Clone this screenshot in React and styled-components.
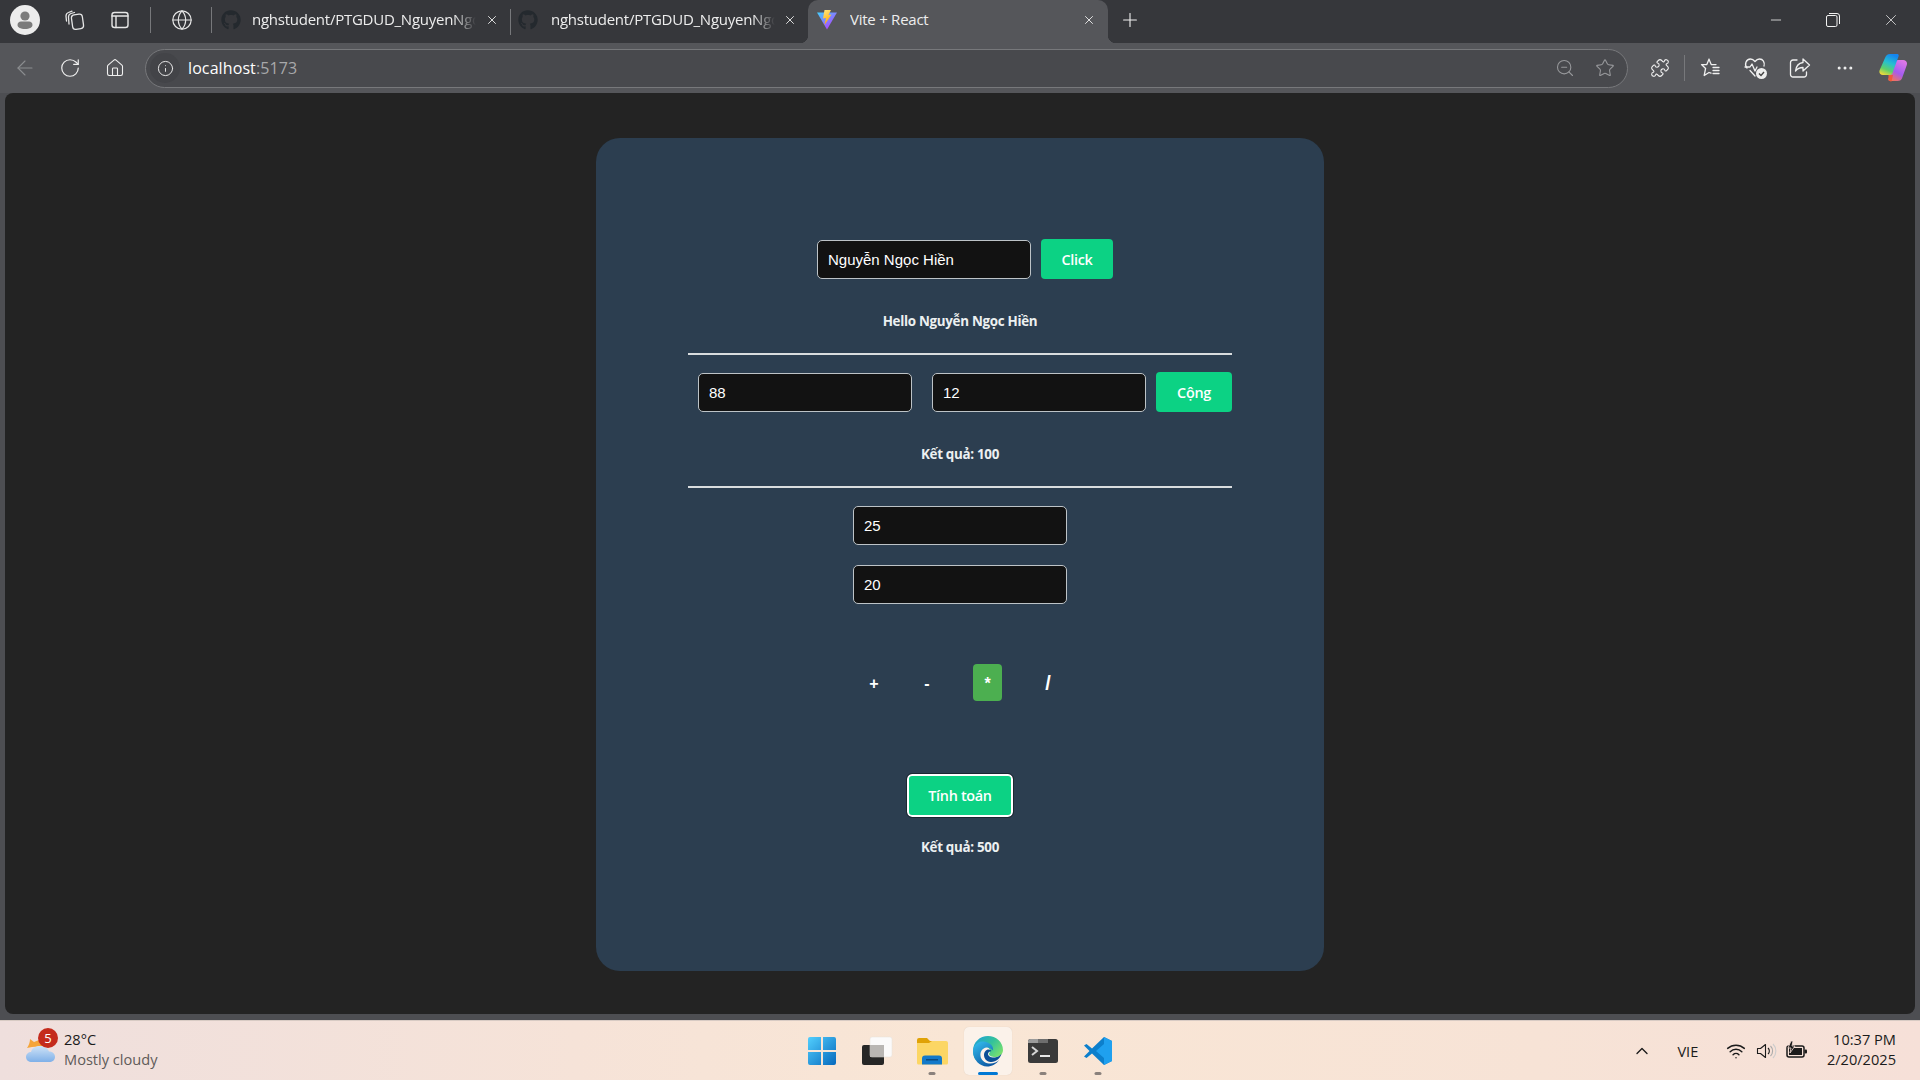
import React from "react";
import styled, { createGlobalStyle } from "styled-components";
import { FaGithub } from "react-icons/fa";
import {
  ArrowLeft, RotateCw, Home, Info, Globe, ZoomOut, Star, Puzzle, X, Plus, Minus,
  Ellipsis, ChevronUp, Wifi,
} from "lucide-react";

const UI = '"Open Sans", "Noto Sans", sans-serif';
const ARIAL = '"Liberation Sans", Arial, sans-serif';

const Global = createGlobalStyle`
  html, body { margin: 0; padding: 0; background: #55565a; }
  * { box-sizing: border-box; }
`;

const Screen = styled.div`
  width: 1920px; height: 1080px; overflow: hidden;
  display: flex; flex-direction: column;
  font-family: ${UI};
`;

const TabBar = styled.div`
  height: 43px; flex: none; display: flex; align-items: center;
  background: #36373b; color: #f2f2f2;
  & > * { padding-bottom: 3px; }
`;
const Slot = styled.div`
  width: ${(p) => p.$w}px; flex: none; height: 100%;
  display: flex; align-items: center; justify-content: center;
  color: ${(p) => p.$c || "#e6e6e6"};
`;
const Divider = styled.div`
  width: 1px; height: ${(p) => p.$h || 26}px; flex: none; background: #77787b;
`;
const Avatar = styled.div`
  width: 30px; height: 30px; border-radius: 50%; background: #ececec;
  display: flex; align-items: center; justify-content: center;
`;
const Tab = styled.div`
  position: relative; flex: none; width: ${(p) => p.$w}px; height: 100%;
  display: flex; align-items: center; padding-left: ${(p) => p.$pl}px;
  background: ${(p) => (p.$active ? "#55565a" : "transparent")};
  border-radius: 10px 10px 0 0;
  ${(p) =>
    p.$active &&
    `&::before, &::after { content: ""; position: absolute; bottom: 0; width: 8px; height: 8px; }
     &::before { left: -8px; background: radial-gradient(circle at 0 0, transparent 8px, #55565a 8.5px); }
     &::after { right: -8px; background: radial-gradient(circle at 100% 0, transparent 8px, #55565a 8.5px); }`}
`;
const TabIcon = styled.div`
  width: ${(p) => p.$w}px; flex: none; display: flex; align-items: center; color: #24292e;
`;
const TabTitle = styled.div`
  width: 224px; flex: none; font-size: 15px; white-space: nowrap; overflow: hidden;
  color: #ededed; letter-spacing: -0.25px; margin-top: -2px;
  ${(p) => p.$fade && `-webkit-mask-image: linear-gradient(90deg, #000 90%, transparent 100%);`}
`;
const TabClose = styled.div`
  width: 16px; margin-left: ${(p) => p.$ml}px; flex: none; display: flex; color: #f2f2f2;
`;
const Spring = styled.div` flex: 1; `;

const Toolbar = styled.div`
  height: 50px; flex: none; display: flex; align-items: center; background: #55565a;
`;
const Address = styled.div`
  width: 1483px; height: 39px; flex: none; margin-left: 5px; display: flex; align-items: center;
  border: 1.5px solid #77787b; border-radius: 20px; background: #48494d; padding-right: 2px;
`;
const InfoWrap = styled.div`
  width: 42px; padding-right: 4px; flex: none; display: flex; justify-content: center;
`;
const InfoDisc = styled.div`
  width: 30px; height: 30px; border-radius: 50%; background: #434448; color: #e8e8e8;
  display: flex; align-items: center; justify-content: center;
`;
const Url = styled.div`
  font-size: 16px; color: #fff; letter-spacing: 0.1px; margin-top: -1px;
  span { color: #a7a8aa; }
`;
const Gap = styled.div` width: ${(p) => p.$w}px; flex: none; `;

const Body = styled.div`
  flex: 1; padding: 0 5px 6px; background: #4d4e52; display: flex; min-height: 0;
`;
const Viewport = styled.main`
  flex: 1; background: #232323; border-radius: 8px; padding-top: 45px;
  display: flex; justify-content: center; align-items: flex-start;
`;
const Card = styled.section`
  width: 728px; height: 833px; background: #2c3e50; border-radius: 24px; padding: 101px 92px 0;
  color: #ecf0f1; display: flex; flex-direction: column; align-items: center;
`;
const Row = styled.div`
  width: 100%; display: flex; align-items: center; gap: 10px;
  justify-content: center; padding-left: 10px; margin-top: ${(p) => p.$mt || 0}px;
`;
const InputPair = styled.div` display: flex; gap: 20px; `;
const Field = styled.input`
  width: 214px; height: 39px; flex: none; background: #121212; color: #fff;
  border: 1px solid #bdc3c7; border-radius: 5px; padding: 0 10px; margin-top: ${(p) => p.$mt || 0}px;
  font: 15px ${ARIAL}; outline: none;
`;
const Action = styled.button`
  height: 40px; width: ${(p) => p.$w}px; flex: none; border: 0; border-radius: 4px;
  background: #0cd284; color: #fff; padding: 0;
  font: 600 14.4px ${UI}; letter-spacing: -0.3px;
`;
const Message = styled.p`
  margin: ${(p) => p.$mt}px 0 0; height: 19px; line-height: 19px; font-size: 13.4px; font-weight: 700;
  letter-spacing: -0.3px; color: #ecf0f1; text-align: center;
`;
const Rule = styled.hr`
  width: 100%; height: 2px; margin: 22px 0 0; border: 0; background: #d9dcde; flex: none;
`;
const Ops = styled.div`
  display: flex; gap: 40px; margin-top: 60px; height: 37px; align-items: stretch; margin-left: 1px;
`;
const Op = styled.button`
  width: ${(p) => p.$w}px; padding: 2px 0 0; border: 0; border-radius: 4px; color: #fff;
  background: ${(p) => (p.$on ? "#4caf50" : "transparent")};
  font: 700 ${(p) => p.$fs || 16}px ${ARIAL};
`;
const Compute = styled.button`
  width: 106px; height: 43px; margin-top: 73px; flex: none; padding: 0; border-radius: 5px;
  background: #0cd284; color: #fff; border: 2px solid #fff; outline: 1px solid #1b2631;
  font: 600 14.4px ${UI}; letter-spacing: -0.3px;
`;

const Taskbar = styled.footer`
  height: 60px; flex: none; display: flex; align-items: stretch;
  background: linear-gradient(90deg, #efdfdd 0%, #f6e3d8 30%, #f9e6d5 50%, #f7e3d6 80%, #f6e0d8 100%);
  border-top: 1px solid #d8cbc4;
`;
const Weather = styled.div`
  width: 795px; flex: none; display: flex; align-items: center; padding-left: 25px;
`;
const WeatherIcon = styled.div`
  position: relative; width: 39px; height: 40px; flex: none; display: flex; align-items: flex-end;
  padding-bottom: 8px;
`;
const Badge = styled.div`
  position: absolute; left: 13px; top: -3px; width: 20px; height: 20px; border-radius: 50%;
  background: #c42b1c; color: #fff; font-size: 13px; display: flex; align-items: center; justify-content: center;
`;
const TwoLines = styled.div`
  font-size: 14.6px; line-height: 20px; color: #1b1b1b; margin-top: -4px;
  text-align: ${(p) => (p.$right ? "right" : "left")};
  small { display: block; font-size: 14.6px; color: #5f5b59; }
`;
const Apps = styled.div` display: flex; align-items: center; `;
const AppButton = styled.div`
  position: relative; width: ${(p) => p.$w}px; height: 48px; flex: none; border-radius: 5px;
  display: flex; align-items: center; justify-content: center;
  background: ${(p) => (p.$active ? "#fbf2ea" : "transparent")};
  margin: ${(p) => (p.$active ? "0 1px 0 5px" : "0")};
  box-shadow: ${(p) => (p.$active ? "0 0 1px #0002" : "none")};
`;
const Running = styled.div`
  position: absolute; bottom: 0; left: 50%; transform: translateX(-50%);
  width: ${(p) => (p.$active ? 20 : 7)}px; height: 3px; border-radius: 2px;
  background: ${(p) => (p.$active ? "#0078d4" : "#8a817c")};
`;
const Tray = styled.div`
  margin-left: auto; display: flex; align-items: center; padding-right: 24px; color: #1b1b1b;
`;
const TraySlot = styled.div`
  width: ${(p) => p.$w}px; flex: none; display: flex; justify-content: center; align-items: center;
  font-size: 14.6px;
`;

const s = { fill: "none", stroke: "currentColor", strokeWidth: 1.3, strokeLinecap: "round", strokeLinejoin: "round" };

const Collections = () => (
  <svg width="22" height="22" viewBox="0 0 22 22" {...s}>
    <path d="M2.500 12 2 7C2 5 3 4 4.500 3.500L8 2.200" /><path d="M5 15 4.500 8C4.500 6 5.500 5 7 4.500L10.500 3.500" />
    <rect x="8" y="5.500" width="11" height="14.500" rx="3" transform="rotate(-8 13.500 12.750)" />
  </svg>
);
const VerticalTabs = () => (
  <svg width="20" height="20" viewBox="0 0 20 20" {...s} strokeWidth="1.4">
    <rect x="2" y="2.500" width="16" height="15" rx="2.500" /><path d="M2 6h16M6 6v11.500" />
  </svg>
);
const UserGlyph = () => (
  <svg width="24" height="24" viewBox="0 0 24 24" fill="#7b7b7b">
    <circle cx="12" cy="8" r="4.600" /><path d="M4.500 17c0-2.400 1.600-3.600 3.500-3.600h8c2 0 3.500 1.200 3.500 3.600 0 2.400-3 4-7.500 4s-7.500-1.600-7.500-4z" />
  </svg>
);
const ViteLogo = () => (
  <svg width="22" height="22" viewBox="0 0 22 22">
    <defs>
      <linearGradient id="vb" x1="0" y1="0" x2="0.8" y2="1"><stop offset="0" stopColor="#41d1ff" /><stop offset="1" stopColor="#bd34fe" /></linearGradient>
      <linearGradient id="vy" x1="0" y1="0" x2="0.3" y2="1"><stop offset="0" stopColor="#ffea83" /><stop offset="1" stopColor="#ffa800" /></linearGradient>
    </defs>
    <path d="M1 3.500 21 3.500 11 20.500z" fill="url(#vb)" />
    <path d="M8.500 1 15 1 12.500 6 15.500 5.500 8.500 16 10 9 7 9.500z" fill="url(#vy)" />
  </svg>
);
const FavIcon = () => (
  <svg width="24" height="24" viewBox="0 0 24 24" {...s}>
    <path d="M11 3.200 13.200 8.600H18M8.800 8.600H3.500L7.600 12.400 6.200 19.500 11 16.500 13 17.200M8.800 8.600 11 3.200" />
    <path d="M15 11.500h6M15 14.500h6M15 17.500h6" />
  </svg>
);
const HeartIcon = () => (
  <svg width="26" height="26" viewBox="0 0 26 26">
    <g {...s}>
      <path d="M4 13C1 9.500 3 4 7.500 4c2.300 0 3.500 1.300 4.500 2.500C13 5.300 14.200 4 16.500 4c3.500 0 5.500 3.300 4.500 7" />
      <path d="M2 12h5l2-3 3 7 2-4" /><path d="M7 15.500 12 21" />
    </g>
    <circle cx="18.500" cy="18.500" r="5.500" fill="#eee" /><path d="M16 18.500l2 2 3-3.500" fill="none" stroke="#444" strokeWidth="1.400" />
  </svg>
);
const ShareIcon = () => (
  <svg width="24" height="24" viewBox="0 0 24 24" {...s}>
    <path d="M9 4H5a2.500 2.500 0 0 0-2.500 2.500v12A2.500 2.500 0 0 0 5 21h11a2.500 2.500 0 0 0 2.500-2.500V16" />
    <path d="M15 3l6.500 6-6.500 6v-3.500c-3.500 0-5.500 1-7.500 3.500.5-4.500 3-7.800 7.500-8.500z" />
  </svg>
);
const Copilot = () => (
  <svg width="28" height="28" viewBox="0 0 28 28">
    <defs>
      <linearGradient id="c1" x1="0.6" y1="0" x2="0.2" y2="1"><stop offset="0" stopColor="#1485f0" /><stop offset="0.4" stopColor="#26c0d0" /><stop offset="0.72" stopColor="#5ed06a" /><stop offset="1" stopColor="#f4d83a" /></linearGradient>
      <linearGradient id="c2" x1="0.8" y1="0" x2="0.3" y2="1"><stop offset="0" stopColor="#e27ae6" /><stop offset="0.6" stopColor="#a45cf0" /><stop offset="1" stopColor="#f2715f" /></linearGradient>
    </defs>
    <path d="M19 6H24C27 6 28.600 8 27.800 11L23.500 23C22.500 26 21 27 18.500 27H11C9.500 27 9 26 9.500 24.500L15.500 9C16.200 7 17.500 6 19 6z" fill="url(#c2)" />
    <path d="M11 0H18C19.500 0 20 1 19.500 2.500L13.500 19C13 20.500 12 21 10.500 21H4C1 21-.3 18.500.7 16L6 4C7 1.500 8.500 0 11 0z" fill="url(#c1)" />
    <path d="M9.500 21H14L12.500 27.500C11 27.500 9 26.500 9.500 24z" fill="#ef5a3c" />
  </svg>
);
const WeatherGlyph = () => (
  <svg width="34" height="30" viewBox="0 0 34 30">
    <defs><linearGradient id="wc" x1="0" y1="0" x2="0" y2="1"><stop offset="0" stopColor="#cfe3f7" /><stop offset="1" stopColor="#7fb0e8" /></linearGradient></defs>
    <path d="M7 14 2 15c2-3 3-6 3-9l4 3 5-2 6 6z" fill="#f5a53a" />
    <path d="M7 29c-3.500 0-6-2-6-5s2.500-5 5-5c1-4 5-6.500 10-6 4 .4 7 2.500 8 5.500 4 0 6 2.500 6 5.500s-2.500 5-6 5z" fill="url(#wc)" />
  </svg>
);
const WinLogo = () => (
  <svg width="30" height="30" viewBox="0 0 30 30">
    <defs><linearGradient id="wl" x1="0" y1="0" x2="1" y2="1"><stop offset="0" stopColor="#52cffe" /><stop offset="1" stopColor="#0669bd" /></linearGradient></defs>
    <path fill="url(#wl)" d="M1 3a2 2 0 0 1 2-2h11v13H1zM16 1h11a2 2 0 0 1 2 2v11H16zM1 16h13v13H3a2 2 0 0 1-2-2zM16 16h13v11a2 2 0 0 1-2 2H16z" />
  </svg>
);
const TaskView = () => (
  <svg width="32" height="30" viewBox="0 0 32 30">
    <rect x="1" y="9" width="22" height="20" rx="2" fill="#262626" />
    <rect x="9" y="1" width="22" height="20" rx="2" fill="#fbfafa" stroke="#e5e0db" strokeWidth="0.500" />
    <rect x="9" y="9" width="14" height="12" fill="#b9b6b3" />
  </svg>
);
const Folder = () => (
  <svg width="32" height="28" viewBox="0 0 32 28">
    <path d="M1 3a2 2 0 0 1 2-2h8l3 3h16v5H1z" fill="#e0a206" />
    <path d="M1 6h12l3-2h14a2 2 0 0 1 2 2v20a1.500 1.500 0 0 1-1.500 1.500h-28A1.500 1.500 0 0 1 1 26z" fill="#fcd664" />
    <path d="M6 27.500v-6a3 3 0 0 1 3-3h14a3 3 0 0 1 3 3v6z" fill="#1379c9" />
    <rect x="10" y="22" width="12" height="1.500" fill="#0b4a80" />
  </svg>
);
const EdgeLogo = () => (
  <svg width="32" height="32" viewBox="0 0 32 32">
    <defs>
      <linearGradient id="eb" x1="0" y1="0" x2="0.6" y2="1"><stop offset="0" stopColor="#35c1f1" /><stop offset="1" stopColor="#0c59a4" /></linearGradient>
      <linearGradient id="eg" x1="0" y1="0" x2="1" y2="0.7"><stop offset="0" stopColor="#1b9de2" /><stop offset="0.55" stopColor="#34c29a" /><stop offset="1" stopColor="#7fe36a" /></linearGradient>
    </defs>
    <path d="M1 16C1 7 8 1 16 1s15 6 15 14c0 4.500-4 7-8 7-3 0-6-1-6-3 0-1 1-1.500 1-3 0-2.500-2.500-4.500-5.500-4.500-5 0-8 4-8 9 0 2 .4 3.500 1 5C3.500 26 1 21.500 1 16z" fill="url(#eg)" />
    <path d="M2 12c2-4 6-6 10-5.500 6 .8 10 5 9 9-1.500-2-4-3.500-6.500-3-4 .6-6.500 4-6 8.500.5 4 4 7 8.500 7.500 4 .4 8-1 10-3.500-2.500 4-7 6.500-12 6.500C8 31.500 1 25 1 16c0-1.400.4-2.800 1-4z" fill="url(#eb)" />
    <path d="M16 19c0 2 3 4 7 3.500 2.500-.3 5.500-1.600 6.500-4-1 5-6 9-11 8.500-4-.5-6.500-3.500-6.500-7 0-3 2-5.500 4.500-5.500 1.500 0 2.500 1 3 1.500-2 .3-3.500 1.500-3.500 3z" fill="#0a4f96" />
  </svg>
);
const Terminal = () => (
  <svg width="32" height="26" viewBox="0 0 32 26">
    <rect x="1" y="1" width="30" height="24" rx="2.500" fill="#3a3a3a" />
    <path d="M3.500 1h10v4H1V3.500A2.500 2.500 0 0 1 3.500 1z" fill="#9b9b9b" /><rect x="11" y="1" width="10" height="4" fill="#6e6e6e" />
    <path d="M5 9l5 4-5 4" fill="none" stroke="#d6d6d6" strokeWidth="2" /><rect x="13" y="17" width="10" height="2" fill="#e8e8e8" />
  </svg>
);
const VSCode = () => (
  <svg width="30" height="30" viewBox="0 0 30 30">
    <path d="M21 1 29 5v20l-8 4L9 17.500 3.500 22 1 20.500 6.500 15 1 9.500 3.500 8 9 12.500z" fill="#0c7fcc" />
    <path d="M21 1 29 5v20l-8 4zM21 8l-8 7 8 7z" fill="#1fa0ef" fillRule="evenodd" />
  </svg>
);
const Speaker = () => (
  <svg width="22" height="20" viewBox="0 0 22 20" fill="none" stroke="#1b1b1b" strokeWidth="1.100">
    <path d="M1.500 7.500v5h3l5 4v-13l-5 4z" strokeLinejoin="round" />
    <path d="M12 7a4 4 0 0 1 0 6" /><path d="M14.500 5a7 7 0 0 1 0 10" stroke="#aaa" /><path d="M17 3a10 10 0 0 1 0 14" stroke="#ccc" />
  </svg>
);
const Battery = () => (
  <svg width="22" height="20" viewBox="0 0 22 20">
    <rect x="1" y="5" width="17" height="11" rx="2" fill="none" stroke="#1b1b1b" strokeWidth="1.500" />
    <rect x="3" y="7" width="13" height="7" fill="#1b1b1b" /><rect x="18.500" y="8.500" width="2.500" height="4" rx="1" fill="#1b1b1b" />
    <path d="M5 0 2 7h3l-1 5 5-7H6l1-5z" fill="#1b1b1b" stroke="#f6e0d8" strokeWidth="0.800" />
  </svg>
);
const RestoreIcon = () => (
  <svg width="14" height="14" viewBox="0 0 14 14" fill="none" stroke="#f2f2f2" strokeWidth="1">
    <rect x="0.500" y="2.500" width="10.500" height="11" rx="1.500" /><path d="M3 .5h8a2.500 2.500 0 0 1 2.500 2.500v8" />
  </svg>
);

export default function App() {
  const small = { size: 20, strokeWidth: 1.3 };
  return (
    <Screen>
      <Global />
      <TabBar>
        <Slot $w={50}><Avatar><UserGlyph /></Avatar></Slot>
        <Slot $w={50}><Collections /></Slot>
        <Slot $w={40}><VerticalTabs /></Slot>
        <Slot $w={20}><Divider /></Slot>
        <Slot $w={44}><Globe size={22} strokeWidth={1.3} /></Slot>
        <Slot $w={14}><Divider /></Slot>
        <Tab $w={292} $pl={3}>
          <TabIcon $w={31}><FaGithub size={20} /></TabIcon>
          <TabTitle $fade>nghstudent/PTGDUD_NguyenNgọc</TabTitle>
          <TabClose $ml={9}><X size={14} strokeWidth={1.5} /></TabClose>
        </Tab>
        <Divider />
        <Tab $w={297} $pl={7}>
          <TabIcon $w={33}><FaGithub size={20} /></TabIcon>
          <TabTitle $fade>nghstudent/PTGDUD_NguyenNgọc</TabTitle>
          <TabClose $ml={8}><X size={14} strokeWidth={1.5} /></TabClose>
        </Tab>
        <Tab $w={300} $pl={8} $active>
          <TabIcon $w={34}><ViteLogo /></TabIcon>
          <TabTitle>Vite + React</TabTitle>
          <TabClose $ml={8}><X size={14} strokeWidth={1.5} /></TabClose>
        </Tab>
        <Slot $w={44}><Plus size={22} strokeWidth={1.2} color="#f2f2f2" /></Slot>
        <Spring />
        <Slot $w={56}><Minus size={16} strokeWidth={1.2} color="#f2f2f2" /></Slot>
        <Slot $w={58}><RestoreIcon /></Slot>
        <Slot $w={58}><X size={18} strokeWidth={1} color="#f2f2f2" /></Slot>
      </TabBar>
      <Toolbar>
        <Slot $w={50} $c="#8c8d90"><ArrowLeft size={24} strokeWidth={1.1} /></Slot>
        <Slot $w={40} $c="#f0f0f0"><RotateCw size={22} strokeWidth={1.3} /></Slot>
        <Slot $w={50} $c="#f0f0f0"><Home size={20} strokeWidth={1.3} /></Slot>
        <Address>
          <InfoWrap><InfoDisc><Info size={17} strokeWidth={1.4} /></InfoDisc></InfoWrap>
          <Url>localhost<span>:5173</span></Url>
          <Spring />
          <Slot $w={40} $c="#97989b"><ZoomOut {...small} /></Slot>
          <Slot $w={40} $c="#97989b"><Star {...small} /></Slot>
        </Address>
        <Gap $w={10} />
        <Slot $w={44} $c="#f0f0f0"><Puzzle size={20} strokeWidth={1.3} /></Slot>
        <Slot $w={4}><Divider /></Slot>
        <Slot $w={48} $c="#f0f0f0"><FavIcon /></Slot>
        <Slot $w={44} $c="#f0f0f0"><HeartIcon /></Slot>
        <Slot $w={44} $c="#f0f0f0"><ShareIcon /></Slot>
        <Slot $w={46} $c="#f0f0f0"><Ellipsis size={20} strokeWidth={1.6} /></Slot>
        <Slot $w={50}><Copilot /></Slot>
      </Toolbar>
      <Body>
        <Viewport>
          <Card>
            <Row>
              <Field defaultValue="Nguyễn Ngọc Hiền" />
              <Action $w={72}>Click</Action>
            </Row>
            <Message $mt={33}>Hello Nguyễn Ngọc Hiền</Message>
            <Rule />
            <Row $mt={17}>
              <InputPair>
                <Field type="number" defaultValue="88" />
                <Field type="number" defaultValue="12" />
              </InputPair>
              <Action $w={76}>Cộng</Action>
            </Row>
            <Message $mt={33}>Kết quả: 100</Message>
            <Rule />
            <Field type="number" defaultValue="25" $mt={18} />
            <Field type="number" defaultValue="20" $mt={20} />
            <Ops>
              <Op $w={14}>+</Op>
              <Op $w={12}>-</Op>
              <Op $w={29} $on>*</Op>
              <Op $w={12} $fs={20}>/</Op>
            </Ops>
            <Compute>Tính toán</Compute>
            <Message $mt={21}>Kết quả: 500</Message>
          </Card>
        </Viewport>
      </Body>
      <Taskbar>
        <Weather>
          <WeatherIcon>
            <WeatherGlyph />
            <Badge>5</Badge>
          </WeatherIcon>
          <TwoLines>28°C<small>Mostly cloudy</small></TwoLines>
        </Weather>
        <Apps>
          <AppButton $w={54}><WinLogo /></AppButton>
          <AppButton $w={56}><TaskView /></AppButton>
          <AppButton $w={54}><Folder /><Running /></AppButton>
          <AppButton $w={48} $active><EdgeLogo /><Running $active /></AppButton>
          <AppButton $w={60}><Terminal /><Running /></AppButton>
          <AppButton $w={50}><VSCode /><Running /></AppButton>
        </Apps>
        <Tray>
          <TraySlot $w={40}><ChevronUp size={20} strokeWidth={1.6} /></TraySlot>
          <TraySlot $w={52}>VIE</TraySlot>
          <TraySlot $w={4} />
          <TraySlot $w={37}><Wifi size={20} strokeWidth={1.8} /></TraySlot>
          <TraySlot $w={24}><Speaker /></TraySlot>
          <TraySlot $w={36}><Battery /></TraySlot>
          <TraySlot $w={12} />
          <TwoLines $right>10:37 PM<br />2/20/2025</TwoLines>
        </Tray>
      </Taskbar>
    </Screen>
  );
}
